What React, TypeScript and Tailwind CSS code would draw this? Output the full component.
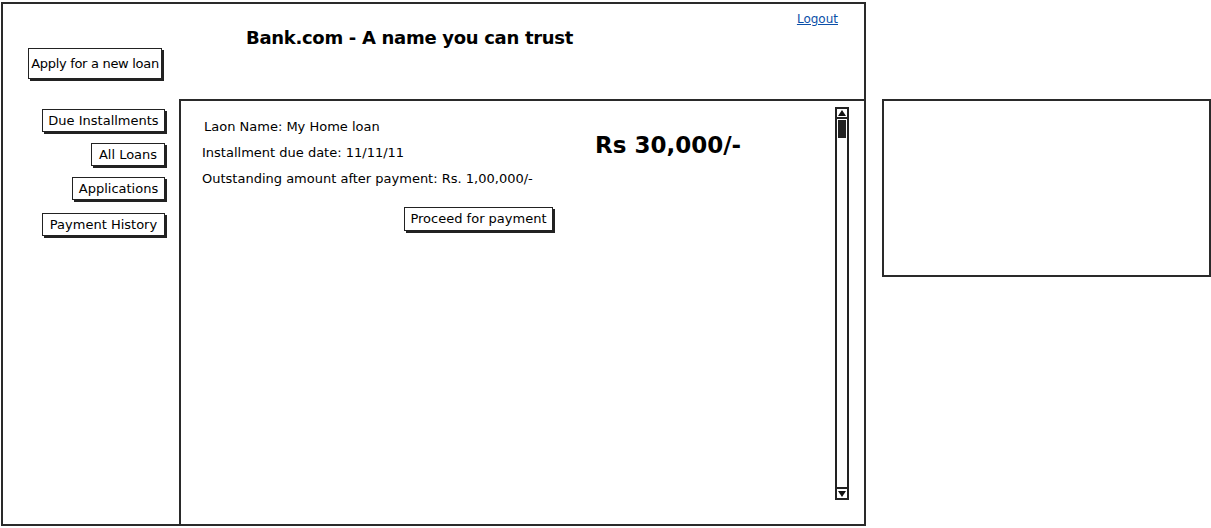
import React from "react";

const font = { fontFamily: '"Comic Sans MS", "DejaVu Sans", "Noto Sans", sans-serif' };

const SketchButton: React.FC<{ label: string; className?: string }> = ({ label, className = "" }) => (
  <button
    type="button"
    className={`bg-white border border-[#222] shadow-[2px_2px_0_#222] text-[13px] leading-none text-black whitespace-nowrap ${className}`}
  >
    {label}
  </button>
);

const navItems = [
  { label: "Due Installments", cls: "w-[123px]" },
  { label: "All Loans", cls: "w-[74px] mt-[11px]" },
  { label: "Applications", cls: "w-[93px] mt-[11px]" },
  { label: "Payment History", cls: "w-[123px] mt-[13px]" },
];

const Scrollbar: React.FC = () => (
  <div className="flex flex-col w-[14px] h-[393px] border-2 border-[#222] mt-[6px] mr-[15px]">
    <div className="h-[10px] border-b-2 border-[#222] flex items-center justify-center">
      <svg width="8" height="6" viewBox="0 0 8 6">
        <path d="M4 0 L8 6 L0 6 Z" fill="#111" />
      </svg>
    </div>
    <div className="mx-[1px] mt-[1px] h-[18px] bg-[#222]" />
    <div className="flex-1" />
    <div className="h-[11px] border-t-2 border-[#222] flex items-center justify-center">
      <svg width="8" height="6" viewBox="0 0 8 6">
        <path d="M0 0 L8 0 L4 6 Z" fill="#111" />
      </svg>
    </div>
  </div>
);

export default function App() {
  return (
    <div className="w-[1211px] h-[528px] bg-white flex items-start text-black" style={font}>
      <div className="ml-[1px] mt-[2px] w-[865px] h-[524px] border-2 border-[#2a2a2a] flex flex-col">
        <header className="h-[95px] flex items-start">
          <div className="ml-[25px] mt-[44px]">
            <SketchButton label="Apply for a new loan" className="w-[134px] h-[31px] text-[13px] tracking-[-0.3px]" />
          </div>
          <h1 className="ml-[84px] mt-[23px] text-[18px] font-bold leading-tight tracking-[-0.3px]">
            Bank.com - A name you can trust
          </h1>
          <a href="#" className="ml-auto mr-[26px] mt-[6px] text-[12px] text-[#0b4fa8] underline">
            Logout
          </a>
        </header>
        <div className="flex flex-1">
          <nav className="w-[176px] flex flex-col items-end pr-[14px] pt-[10px]">
            {navItems.map((n) => (
              <SketchButton key={n.label} label={n.label} className={`${n.cls} h-[23px]`} />
            ))}
          </nav>
          <section className="flex-1 border-t-2 border-l-2 border-[#2a2a2a] flex">
            <div className="flex-1 flex flex-col">
              <div className="flex">
                <div className="w-[412px] pl-[21px] pt-[17px] flex flex-col gap-[8px] text-[13px] leading-[18px]">
                  <p className="pl-[2px]">Laon Name: My Home loan</p>
                  <p>Installment due date: 11/11/11</p>
                  <p>Outstanding amount after payment: Rs. 1,00,000/-</p>
                </div>
                <div className="pl-[2px] pt-[33px] text-[23px] font-bold leading-none">Rs 30,000/-</div>
              </div>
              <div className="ml-[223px] mt-[18px]">
                <SketchButton label="Proceed for payment" className="w-[149px] h-[24px]" />
              </div>
            </div>
            <Scrollbar />
          </section>
        </div>
      </div>
      <div className="ml-[16px] mt-[99px] w-[329px] h-[178px] border-2 border-[#2a2a2a]" />
    </div>
  );
}
